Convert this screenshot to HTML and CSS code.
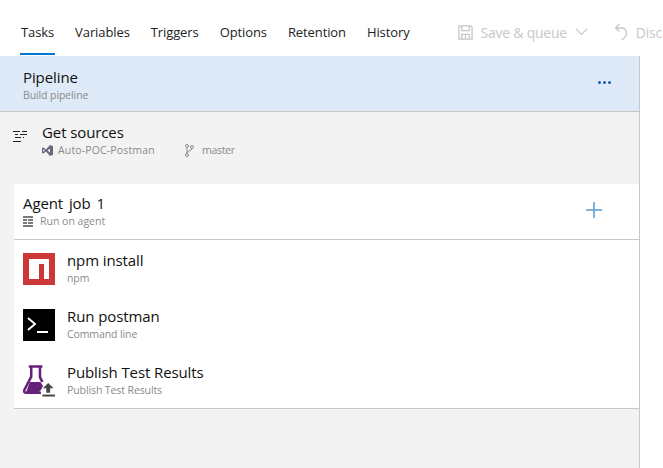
FILE: index.html
```html
<!DOCTYPE html>
<html lang="en">
<head>
<meta charset="utf-8">
<title>Pipeline tasks</title>
<link rel="stylesheet" href="styles.css">
</head>
<body>
<div class="page">
  <header class="topbar">
    <nav class="tabs">
      <a class="tab active">Tasks</a>
      <a class="tab">Variables</a>
      <a class="tab">Triggers</a>
      <a class="tab">Options</a>
      <a class="tab">Retention</a>
      <a class="tab">History</a>
    </nav>
    <div class="divider"></div>
    <div class="action">
      <svg class="icon-save" width="15" height="15" viewBox="0 0 16 16"><path d="M1 1h12.500L15 2.500V15H1z M4 1v5h8V1 M4 15v-5h8v5 M8 11v3" fill="none" stroke="#c6c6c6" stroke-width="1.400"/></svg>
      <span>Save &amp; queue</span>
      <svg class="icon-chev" width="13" height="8" viewBox="0 0 13 8"><path d="M1 1l5.500 5.500L12 1" fill="none" stroke="#c8c8c8" stroke-width="1.100"/></svg>
    </div>
    <div class="action discard">
      <svg width="14" height="18" viewBox="0 0 14 18"><path d="M5.500 1L1.500 5l4 3.500M1.500 5H7c3.500 0 5.500 2 5.500 5 0 2.500-2 5-5 7" fill="none" stroke="#c8c8c8" stroke-width="1.300"/></svg>
      <span>Discard</span>
    </div>
  </header>
  <main class="canvas">
    <section class="pipeline">
      <div>
        <div class="title">Pipeline</div>
        <div class="sub">Build pipeline</div>
      </div>
      <div class="dots"><i></i><i></i><i></i></div>
    </section>
    <section class="sources">
      <svg class="icon-sources" width="15" height="13" viewBox="0 0 15 13"><path d="M0 1.500h7M9 1.500h5M2 4.500h3M7 4.500h7M2 7.500h6M10 7.500h1M0 11.500h8" fill="none" stroke="#222" stroke-width="1"/></svg>
      <div>
        <div class="title">Get sources</div>
        <div class="meta">
          <span class="repo">
            <svg width="11" height="11" viewBox="0 0 11 11"><path d="M0 3l1.500-.5L4 4.500 8 0l3 1.300v8.400L8 11 4 6.500 1.500 8.500 0 8z M1.300 4v3L3 5.500z M8 3.500L5.500 5.500 8 7.500z" fill="#68687a" fill-rule="evenodd"/></svg>
            Auto-POC-Postman
          </span>
          <span class="branch">
            <svg width="9" height="13" viewBox="0 0 9 13"><g fill="none" stroke="#8a8a8a"><circle cx="2" cy="2" r="1.500"/><circle cx="2" cy="11" r="1.500"/><circle cx="7" cy="3" r="1.500"/><path d="M2 3.500v6M7 4.500C7 7 2 6.500 2 9"/></g></svg>
            master
          </span>
        </div>
      </div>
    </section>
    <section class="job">
      <div class="job-head">
        <div>
          <div class="title">Agent job 1</div>
          <div class="sub agent">
            <svg width="10" height="11" viewBox="0 0 10 11"><path d="M0 0h10v2H0zM0 3h4v2H0zM5 3h5v2H5zM0 6h4v2H0zM5 6h5v2H5zM0 9h10v2H0z" fill="#7a7a7a"/></svg>
            Run on agent
          </div>
        </div>
        <svg class="plus" width="16" height="16" viewBox="0 0 16 16"><path d="M8 0v16M0 8h16" stroke="#5a9bd5" stroke-width="1.500"/></svg>
      </div>
      <div class="tasks">
        <div class="task">
          <svg class="task-icon" width="32" height="32" viewBox="0 0 32 32"><rect width="32" height="32" fill="#cb3837"/><path d="M6 6h20v20h-5V11h-5v15H6z" fill="#fff"/></svg>
          <div>
            <div class="title">npm install</div>
            <div class="sub">npm</div>
          </div>
        </div>
        <div class="task">
          <svg class="task-icon" width="32" height="32" viewBox="0 0 32 32"><rect width="32" height="32" fill="#000"/><path d="M5 9l7 6-7 6" fill="none" stroke="#fff" stroke-width="2"/><path d="M14 23h11" stroke="#fff" stroke-width="2"/></svg>
          <div>
            <div class="title">Run postman</div>
            <div class="sub">Command line</div>
          </div>
        </div>
        <div class="task">
          <svg class="task-icon" width="32" height="32" viewBox="0 0 33 32"><path d="M6 1h14M8.500 1.500v10L1.500 25c-1 2 0 3 2 3h15M17.500 1.500V12l2.500 5" fill="none" stroke="#68217a" stroke-width="2.600"/><path d="M7 17h11l3 5-5 6H3z" fill="#68217a"/><path d="M26 16l7 7.500h-4v5.500h-6v-5.500h-4z" fill="#fff"/><path d="M26 18l5.500 5.500H28v4.500h-4v-4.500h-3.500z" fill="#444"/><path d="M20 31h13" stroke="#444" stroke-width="2"/></svg>
          <div>
            <div class="title">Publish Test Results</div>
            <div class="sub">Publish Test Results</div>
          </div>
        </div>
      </div>
    </section>
  </main>
</div>
</body>
</html>
```
FILE: styles.css
```css
* { box-sizing: border-box; }
html, body { margin: 0; height: 100%; overflow: hidden; background: #fff; }
body { font-family: "Open Sans", "Noto Sans", sans-serif; color: #1a1a1a; }
.page { width: 663px; height: 468px; display: flex; flex-direction: column; overflow: hidden; }

.topbar { height: 56px; flex: none; display: flex; align-items: flex-start; padding-left: 20px; white-space: nowrap; }
.tabs { display: flex; gap: 19px; height: 55px; }
.tab { height: 55px; padding: 23px 1px 0; font-size: 13px; line-height: 18px; letter-spacing: -0.1px; border-bottom: 2px solid transparent; color: #222; }
.tab.active { border-bottom-color: #0078d4; }
.divider { width: 1px; height: 24px; margin: 20px 20px 0 27px; background: #c8c8c8; }
.action { display: flex; align-items: center; height: 18px; margin-top: 23px; color: #c8c8c8; font-size: 14px; letter-spacing: -0.25px; }
.action span { margin: 0 8px 0 8px; }
.discard { margin-left: 26px; }

.canvas { flex: 1; width: 640px; background: #f3f3f3; border-right: 1.5px solid #c8c8c8; min-height: 0; }
.title { font-size: 15px; line-height: 20px; letter-spacing: -0.1px; color: #111; margin-bottom: 1px; }
.sub, .meta { font-size: 10.5px; line-height: 14px; letter-spacing: -0.1px; color: #8a8a8a; }

.pipeline { height: 56px; padding: 11px 24px 0 23px; display: flex; justify-content: space-between; background: #deeaf7; border-bottom: 1px solid #c8c8c8; }
.dots { display: flex; gap: 2px; margin: 14px 4px 0 0; }
.dots i { width: 3px; height: 3px; border-radius: 50%; background: #1d5ca8; }

.sources { height: 72px; display: flex; padding: 10px 0 0 13px; }
.icon-sources { margin: 8px 14px 0 0; flex: none; }
.meta { display: flex; letter-spacing: 0.15px; }
.repo { display: flex; align-items: center; gap: 5px; width: 143px; }
.branch { display: flex; align-items: center; gap: 8px; letter-spacing: -0.3px; }

.job { margin-left: 14px; background: #fff; border-bottom: 1px solid #c8c8c8; }
.job-head { height: 56px; padding: 9px 37px 0 9px; display: flex; justify-content: space-between; border-bottom: 1px solid #c8c8c8; }
.job-head .title { word-spacing: 2px; }
.agent { display: flex; align-items: center; gap: 7px; margin-top: 1px; letter-spacing: 0; }
.plus { margin-top: 9px; }
.tasks { height: 168px; padding-top: 13px; display: flex; flex-direction: column; gap: 24px; }
.task { display: flex; height: 32px; padding-left: 9px; }
.task-icon { flex: none; margin-right: 12px; }
.task .title { margin-top: -3px; }
```
